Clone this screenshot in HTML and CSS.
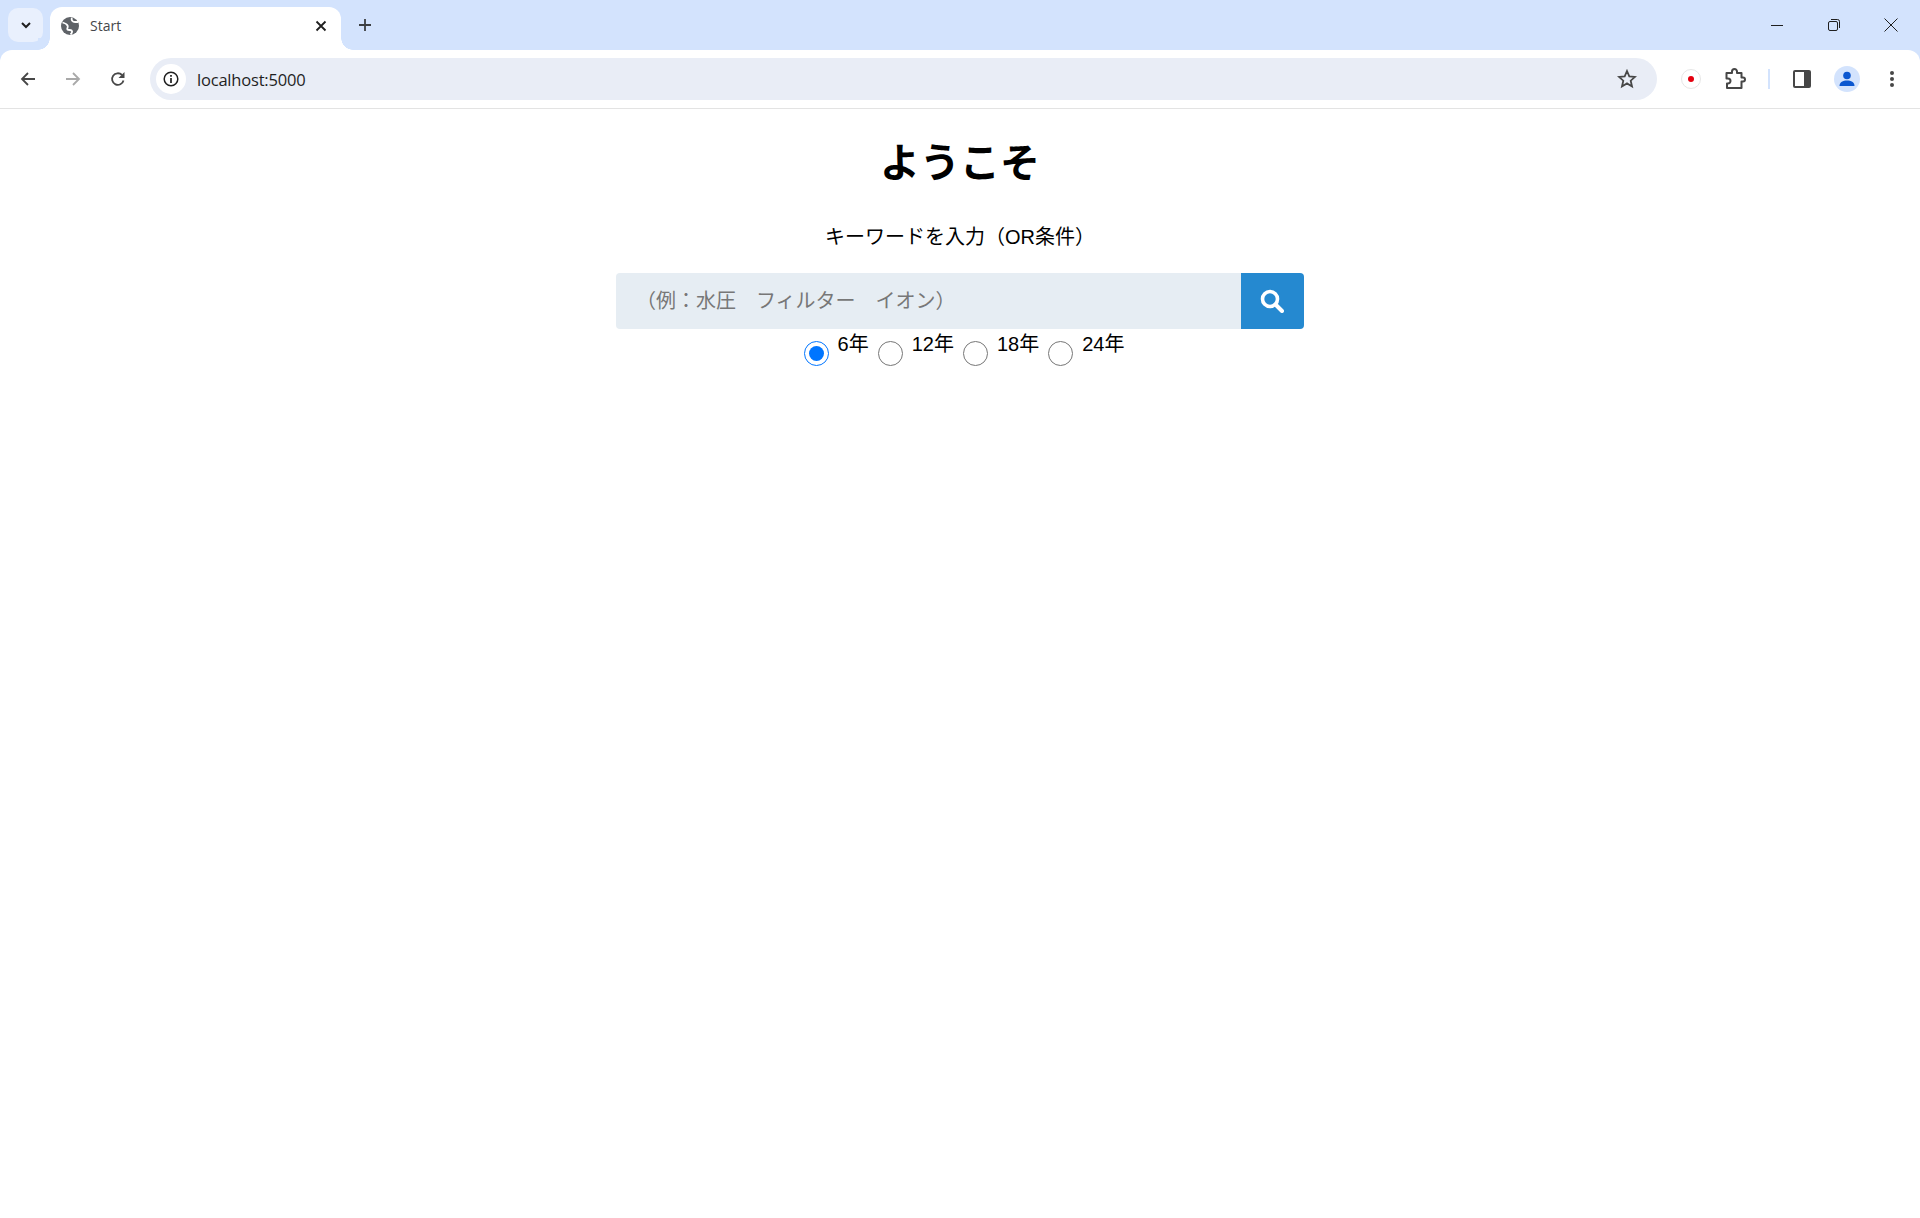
FILE: index.html
```html
<!DOCTYPE html>
<html lang="ja">
<head>
<meta charset="utf-8">
<title>Start</title>
<link rel="stylesheet" href="styles.css">
</head>
<body>
<header class="chrome">
  <div class="tabstrip">
    <div class="tabsearch"><svg width="16" height="16" viewBox="0 0 16 16"><path d="M4 6l4 4 4-4" fill="none" stroke="#1f1f1f" stroke-width="2"/></svg></div>
    <div class="tab">
      <svg class="favicon" width="18" height="18" viewBox="0 0 18 18"><circle cx="9" cy="9" r="9" fill="#5f6368"/><path d="M1.500 5.500c2 .5 4 1 5 3s-1 3 0 4 3 0 4 1 0 3-1 4M11 1c-1 2 .5 4 3 4h3" fill="none" stroke="#fff" stroke-width="1.800"/></svg>
      <span class="tabtitle">Start</span>
      <svg class="tabclose" width="12" height="12" viewBox="0 0 12 12"><path d="M1.500 1.500l9 9M10.500 1.500l-9 9" stroke="#1f1f1f" stroke-width="1.800"/></svg>
    </div>
    <svg class="newtab" width="14" height="14" viewBox="0 0 14 14"><path d="M7 1v12M1 7h12" stroke="#3c3f43" stroke-width="1.800"/></svg>
    <div class="wincontrols">
      <svg width="14" height="14" viewBox="0 0 14 14"><path d="M1 7.500h12" stroke="#1f1f1f" stroke-width="1"/></svg>
      <svg width="14" height="14" viewBox="0 0 14 14"><rect x="1.500" y="3.500" width="9" height="9" rx="1.500" fill="none" stroke="#1f1f1f"/><path d="M4 1.500h6.500a2 2 0 0 1 2 2V10" fill="none" stroke="#1f1f1f"/></svg>
      <svg width="14" height="14" viewBox="0 0 14 14"><path d="M.5.500l13 13M13.500.500l-13 13" stroke="#1f1f1f" stroke-width="1"/></svg>
    </div>
  </div>
  <div class="toolbar">
    <svg class="navicon" width="16" height="16" viewBox="0 0 16 16"><path d="M15 8H2M8 2L2 8l6 6" fill="none" stroke="#474747" stroke-width="1.800"/></svg>
    <svg class="navicon" width="16" height="16" viewBox="0 0 16 16"><path d="M1 8h13M8 2l6 6-6 6" fill="none" stroke="#a9a9a9" stroke-width="1.800"/></svg>
    <svg class="navicon" width="16" height="16" viewBox="0 0 16 16"><path d="M13.500 9.500A5.800 5.800 0 1 1 12 4" fill="none" stroke="#474747" stroke-width="1.800"/><path d="M14.500 1v6h-6z" fill="#474747"/></svg>
    <div class="omnibox">
      <span class="infochip"><svg width="16" height="16" viewBox="0 0 16 16"><circle cx="8" cy="8" r="6.800" fill="none" stroke="#1f1f1f" stroke-width="1.500"/><path d="M8 7v5M8 4v1.800" stroke="#1f1f1f" stroke-width="1.700"/></svg></span>
      <span class="url">localhost:5000</span>
      <svg class="star" width="20" height="20" viewBox="0 0 20 20"><path d="M10 2l2.300 5.400 5.700.5-4.300 3.800 1.300 5.700-5-3-5 3 1.300-5.700L2 7.900l5.700-.5z" fill="none" stroke="#474747" stroke-width="1.800"/></svg>
    </div>
    <div class="toolicons">
      <span class="recext"><span class="recdot"></span></span>
      <svg width="22" height="22" viewBox="0 0 22 22"><path d="M2.500 5H8V3.500a2.500 2.500 0 0 1 5 0V5h4.500v4.500H19a2 2 0 0 1 0 4h-1.500V20H3v-4.500h1a2.500 2.500 0 0 0 0-5H2.500z" fill="none" stroke="#474747" stroke-width="2" stroke-linejoin="round"/></svg>
      <span class="tooldivider"></span>
      <svg width="20" height="20" viewBox="0 0 20 20"><rect x="1" y="1" width="18" height="18" rx="2" fill="#474747"/><rect x="3" y="3" width="9" height="14" fill="#fff"/></svg>
      <span class="avatar"><svg width="18" height="18" viewBox="0 0 18 18"><circle cx="9" cy="5.500" r="3.800" fill="#0b57d0"/><path d="M1.500 16c0-4 3.500-5.500 7.500-5.500s7.500 1.500 7.500 5.500z" fill="#0b57d0"/></svg></span>
      <svg width="6" height="18" viewBox="0 0 6 18"><circle cx="3" cy="3" r="2" fill="#474747"/><circle cx="3" cy="9" r="2" fill="#474747"/><circle cx="3" cy="15" r="2" fill="#474747"/></svg>
    </div>
  </div>
</header>
<main class="page">
  <h1 class="title">ようこそ</h1>
  <p class="lead">キーワードを入力（OR条件）</p>
  <form class="searchform">
    <div class="searchgroup">
      <input class="searchinput" type="text" placeholder="（例：水圧　フィルター　イオン）">
      <button class="searchbtn" type="button"><svg class="searchicon" width="24" height="24" viewBox="0 0 24 24"><circle cx="10" cy="10" r="7.500" fill="none" stroke="#fff" stroke-width="3.600"/><path d="M15.500 15.500l6.500 6.500" stroke="#fff" stroke-width="4" stroke-linecap="round"/></svg></button>
    </div>
    <div class="terms">
      <input class="radio" type="radio" name="term" id="t6" checked><label class="termlabel" for="t6">6年</label>
      <input class="radio" type="radio" name="term" id="t12"><label class="termlabel" for="t12">12年</label>
      <input class="radio" type="radio" name="term" id="t18"><label class="termlabel" for="t18">18年</label>
      <input class="radio" type="radio" name="term" id="t24"><label class="termlabel" for="t24">24年</label>
    </div>
  </form>
</main>
</body>
</html>
```
FILE: styles.css
```css
* { box-sizing: border-box; }
html, body { margin: 0; height: 100%; background: #fff; }
body { font-family: "Liberation Sans", "Noto Sans CJK JP", sans-serif; color: #000; overflow: hidden; }

.chrome { height: 109px; background: #d3e3fd; display: flex; flex-direction: column; }
.tabstrip { height: 50px; display: flex; align-items: flex-start; position: relative; }
.tabsearch { width: 35px; height: 34px; margin: 8px 0 0 8px; background: #e9f0fd; border-radius: 10px; display: flex; align-items: center; justify-content: center; }
.tab { width: 291px; height: 43px; margin: 7px 0 0 7px; background: #fff; border-radius: 12px 12px 0 0; display: flex; align-items: center; padding: 0 14px 6px 11px; position: relative; }
.tab::before, .tab::after { content: ""; position: absolute; bottom: 0; width: 12px; height: 12px; background: radial-gradient(circle at var(--cx) 0, #d3e3fd 11.500px, #fff 12px); }
.tab::before { --cx: 0; left: -12px; }
.tab::after { --cx: 100%; right: -12px; }
.favicon { flex: none; }
.tabtitle { margin-left: 11px; font: 14px "Open Sans", sans-serif; color: #45474a; flex: 1; }
.newtab { margin: 18px 0 0 17px; }
.wincontrols { position: absolute; right: 0; top: 0; height: 50px; display: flex; align-items: center; gap: 43px; padding-right: 22px; }

.toolbar { height: 59px; background: #fff; border-radius: 12px 12px 0 0; border-bottom: 1px solid #e3e3e3; display: flex; align-items: center; padding-left: 20px; }
.navicon { flex: none; margin-right: 29px; }
.navicon:nth-child(3) { margin-right: 24px; }
.omnibox { width: 1507px; height: 42px; background: #e9edf6; border-radius: 21px; display: flex; align-items: center; padding: 0 20px 0 6px; }
.infochip { width: 30px; height: 30px; border-radius: 50%; background: #fff; display: flex; align-items: center; justify-content: center; flex: none; }
.url { margin-left: 11px; font: 16.500px "Open Sans", sans-serif; letter-spacing: -0.200px; color: #1f1f1f; flex: 1; }
.star { flex: none; }
.toolicons { display: flex; align-items: center; flex: 1; padding-left: 24px; }
.recext { width: 20px; height: 20px; border-radius: 50%; border: 1px solid #e6e6e6; display: flex; align-items: center; justify-content: center; margin-right: 23px; }
.recdot { width: 6px; height: 6px; background: #e4000f; border-radius: 50%; }
.tooldivider { width: 2px; height: 20px; background: #d3e3fd; margin: 0 22px; }
.avatar { width: 26px; height: 26px; border-radius: 50%; background: #d3e3fd; display: flex; align-items: center; justify-content: center; margin: 0 29px 0 22px; }

.page { text-align: center; }
.title { margin: 30px 0 0; font-size: 40px; line-height: 1.200; font-weight: 700; }
.lead { margin: 35px 0 0; font-size: 20px; line-height: 30px; }
.searchform { margin-top: 21px; }
.searchgroup { width: 688px; margin: 0 auto; display: flex; height: 56px; }
.searchinput { flex: 1; min-width: 0; border: 0; outline: 0; background: #e6edf3; border-radius: 4px 0 0 4px; padding: 0 20px; font: 20px "Liberation Sans", "Noto Sans CJK JP", sans-serif; }
.searchinput::placeholder { color: #777; opacity: 1; }
.searchbtn { width: 63px; border: 0; padding: 0 1px 0 0; background: #2589d0; border-radius: 0 4px 4px 0; display: flex; align-items: center; justify-content: center; }
.terms { display: flex; justify-content: center; align-items: flex-start; padding-left: 17px; }
.radio { width: 25px; height: 25px; margin: 12px 9px 0 0; accent-color: #0075ff; flex: none; }
.termlabel { font-size: 20px; line-height: 30px; margin-right: 9px; }
```
